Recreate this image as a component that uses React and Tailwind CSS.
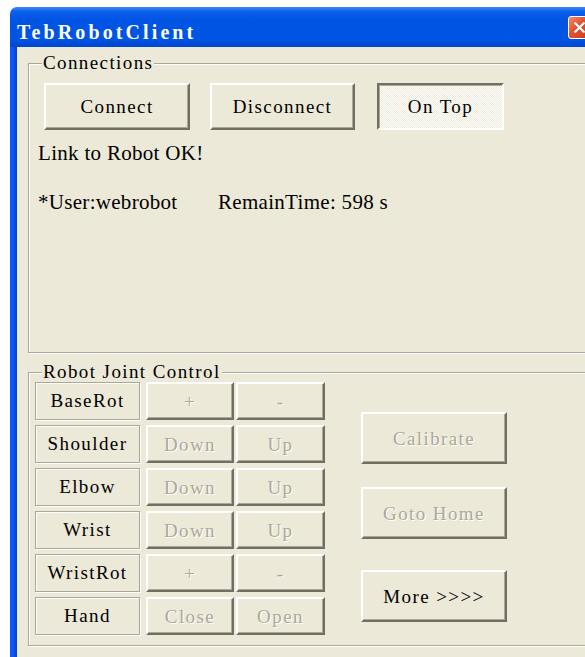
import { X } from 'lucide-react'

const serif = "[font-family:'Liberation_Serif',serif] text-[19px] tracking-[1.4px]"

/* classic raised 3D push button */
function Btn({ children, disabled, pressed, className = '' }) {
  const edge = pressed
    ? 'border-t-[#716f64] border-l-[#716f64] border-b-white border-r-white shadow-[inset_1px_1px_0_#aca899] bg-[repeating-conic-gradient(#ece9d8_0%_25%,#ffffff_0%_50%)] bg-[length:2px_2px]'
    : 'border-t-white border-l-white border-b-[#716f64] border-r-[#716f64] shadow-[inset_-1px_-1px_0_#aca899] bg-[#ece9d8]'
  return (
    <button
      className={`flex items-center justify-center border-2 ${edge} ${serif} leading-none ${
        disabled ? 'text-[#aca899] [text-shadow:1px_1px_0_#fff]' : 'text-black'
      } ${className}`}
    >
      {children}
    </button>
  )
}

/* etched frame used by the group boxes and joint captions */
const etched = 'border border-[#aca899] shadow-[inset_1px_1px_0_#fff,1px_1px_0_#fff]'

function Group({ title, className = '', legendClass = '', children }) {
  return (
    <fieldset className={`${etched} ${className}`}>
      <legend className={`px-[1px] bg-[#ece9d8] ${serif} leading-[20px] text-black ${legendClass}`}>
        {title}
      </legend>
      {children}
    </fieldset>
  )
}

const JOINTS = [
  { name: 'BaseRot', a: '+', b: '-' },
  { name: 'Shoulder', a: 'Down', b: 'Up' },
  { name: 'Elbow', a: 'Down', b: 'Up' },
  { name: 'Wrist', a: 'Down', b: 'Up' },
  { name: 'WristRot', a: '+', b: '-' },
  { name: 'Hand', a: 'Close', b: 'Open' },
]

export default function App() {
  return (
    <div className="w-[585px] h-[657px] bg-white overflow-hidden pt-[7px] pl-[10px]">
      <div className="w-[620px] h-[700px] flex flex-col">
        {/* title bar */}
        <div className="h-[40px] shrink-0 rounded-tl-[7px] flex items-center pl-[7px] bg-[linear-gradient(to_bottom,#3a8cf8_0%,#0a5ee8_12%,#0054e3_35%,#0055e5_80%,#0046cf_100%)]">
          <span className="w-[551px] [font-family:'Liberation_Serif',serif] font-bold text-[20px] tracking-[3.1px] leading-none text-white pt-[9px]">
            TebRobotClient
          </span>
          <div className="w-[23px] h-[23px] rounded-[3px] border border-white bg-[linear-gradient(135deg,#f08a6a,#e0512f_45%,#c83c1c)] flex items-center justify-center">
            <X size={17} strokeWidth={3.2} className="text-white" />
          </div>
        </div>

        <div className="flex-1 flex">
          <div className="w-[7px] bg-[linear-gradient(to_right,#0d5ff2,#0a55ea_50%,#0040d0)]" />
          <div className="flex-1 bg-[#ece9d8] pl-[11px] pt-[6px]">
            <Group title="Connections" className="h-[300px] pl-[15px] pt-[10px]" legendClass="-ml-[2px]">
              <div className="flex">
                <Btn className="w-[146px] h-[47px]">Connect</Btn>
                <Btn className="w-[145px] h-[47px] ml-[20px]">Disconnect</Btn>
                <Btn pressed className="w-[127px] h-[47px] ml-[22px]">On Top</Btn>
              </div>
              <div className="[font-family:'Liberation_Serif',serif] text-[21px] tracking-[0.3px] leading-[22px] text-black -ml-[6px]">
                <p className="mt-[12px]">Link to Robot OK!</p>
                <p className="mt-[27px] flex">
                  <span className="w-[180px]">*User:webrobot</span>
                  <span>RemainTime: 598 s</span>
                </p>
              </div>
            </Group>

            <Group title="Robot Joint Control" className="mt-[9px] h-[284px] pl-[6px]" legendClass="ml-[7px]">
              <div className="flex">
                <div className="flex flex-col gap-[5px]">
                  {JOINTS.map((j) => (
                    <div key={j.name} className="flex h-[38px]">
                      <div className={`${etched} w-[105px] flex items-center justify-center ${serif} text-black`}>
                        {j.name}
                      </div>
                      <Btn disabled className="w-[88px] ml-[6px]">{j.a}</Btn>
                      <Btn disabled className="w-[89px] ml-[2px]">{j.b}</Btn>
                    </div>
                  ))}
                </div>
                <div className="flex flex-col ml-[36px] pt-[30px]">
                  <Btn disabled className="w-[146px] h-[52px]">Calibrate</Btn>
                  <Btn disabled className="w-[146px] h-[52px] mt-[23px]">Goto Home</Btn>
                  <Btn className="w-[146px] h-[52px] mt-[31px]">More &gt;&gt;&gt;&gt;</Btn>
                </div>
              </div>
            </Group>
          </div>
        </div>
      </div>
    </div>
  )
}
